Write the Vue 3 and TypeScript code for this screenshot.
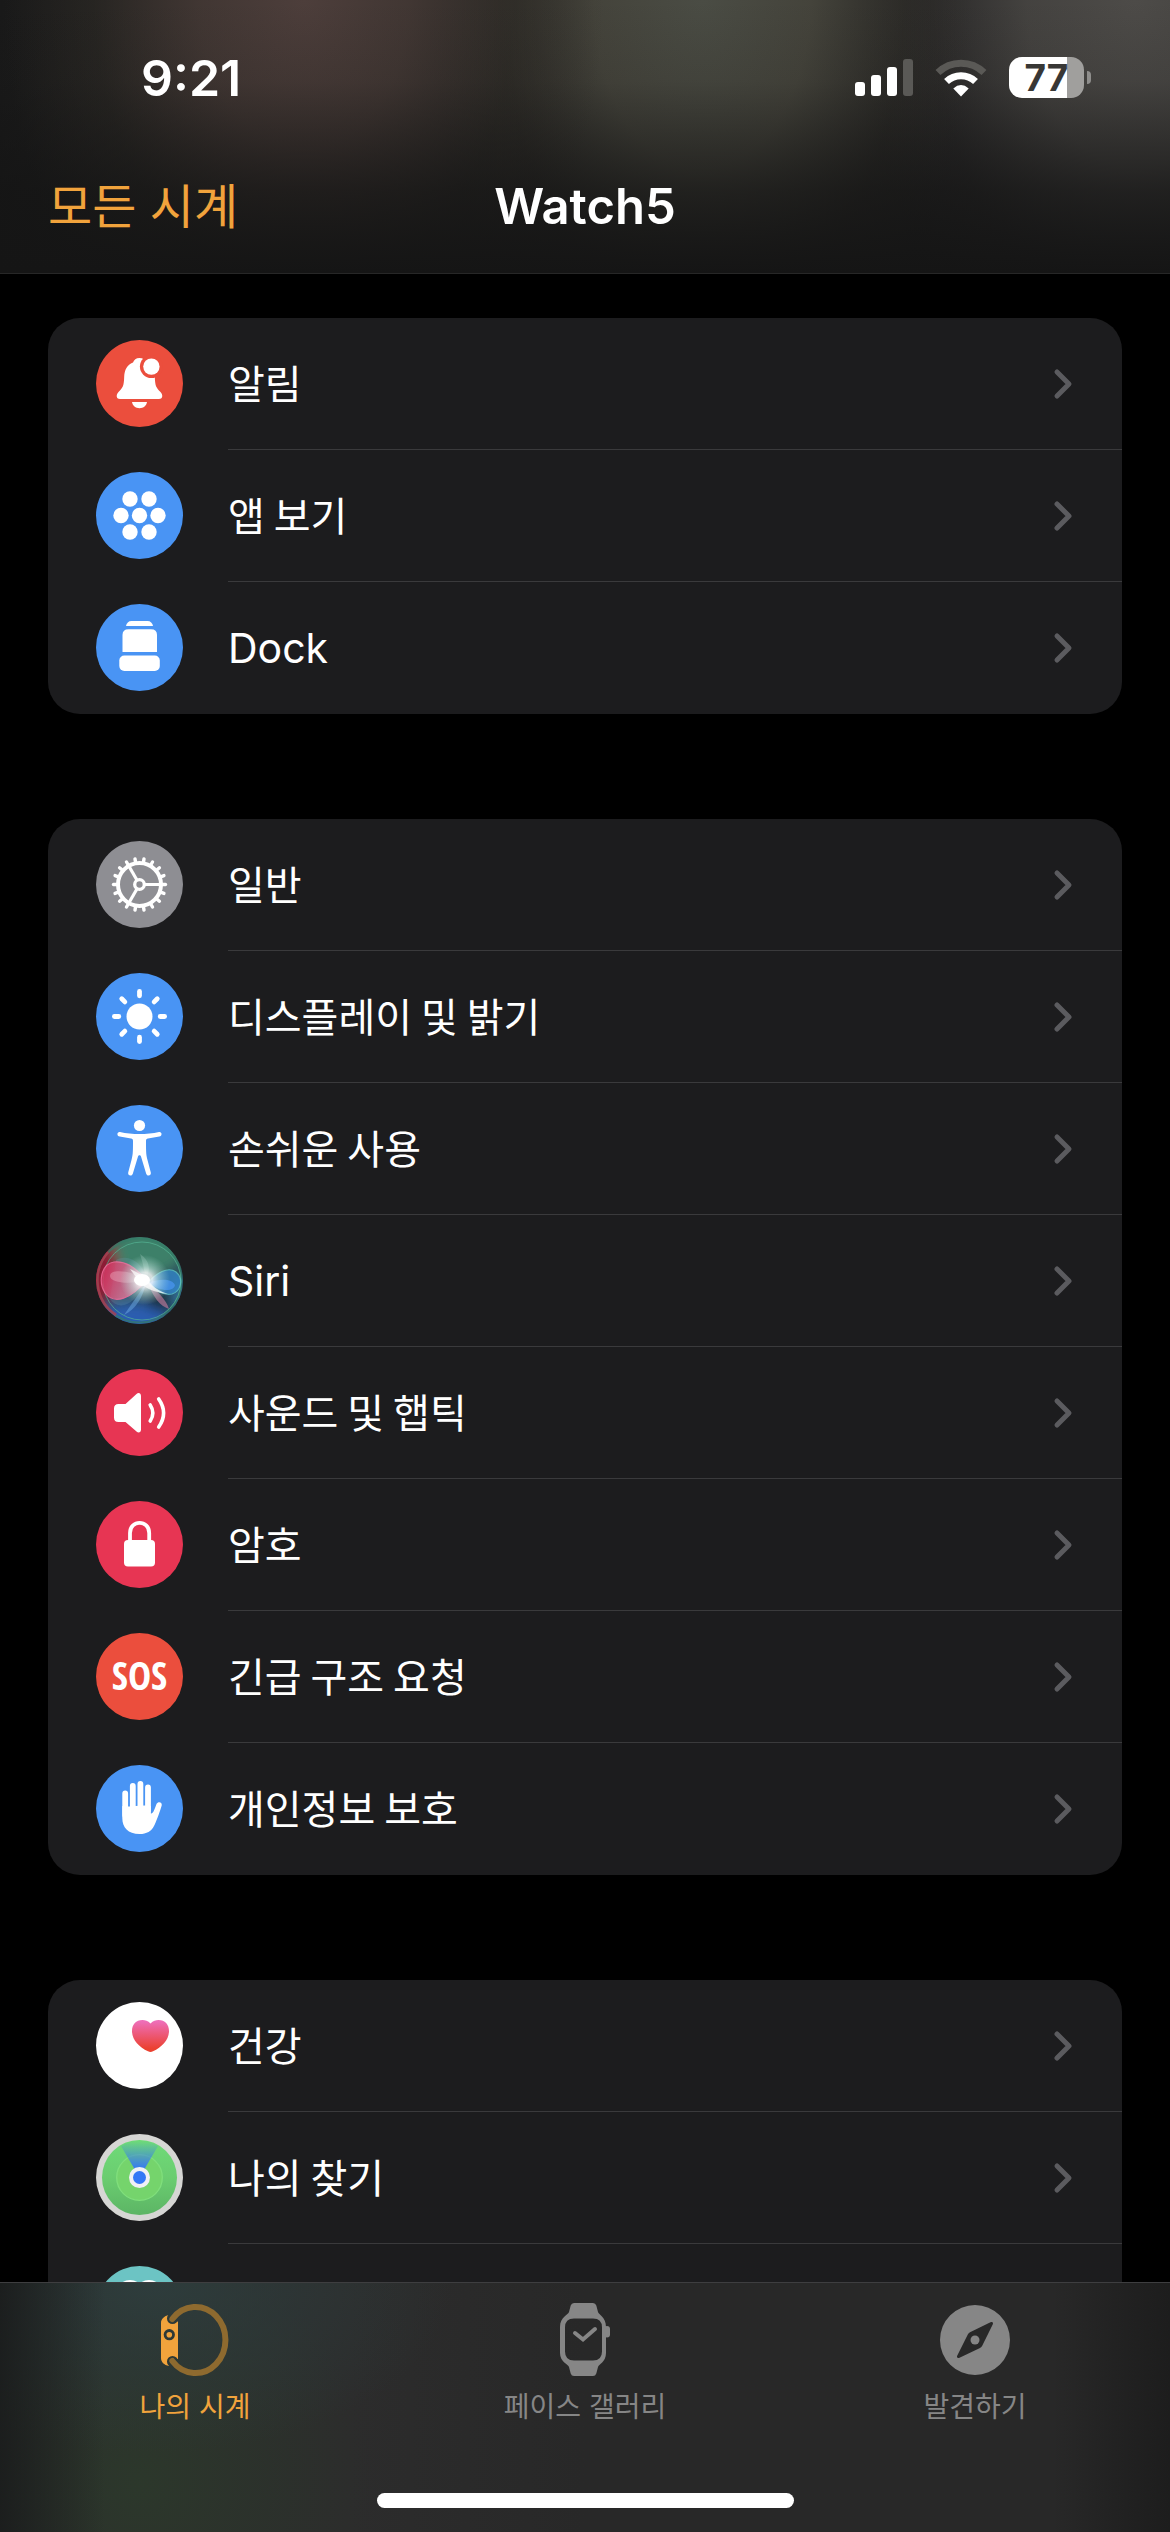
<script setup lang="ts">
interface Row {
  icon: string
  label: string
  color: string
  latin?: boolean
}

const groups: Row[][] = [
  [
    { icon: 'bell', label: '알림', color: '#eb4e3d' },
    { icon: 'apps', label: '앱 보기', color: '#4994f4' },
    { icon: 'dock', label: 'Dock', color: '#4994f4', latin: true },
  ],
  [
    { icon: 'gear', label: '일반', color: '#8e8e93' },
    { icon: 'sun', label: '디스플레이 및 밝기', color: '#4994f4' },
    { icon: 'person', label: '손쉬운 사용', color: '#4994f4' },
    { icon: 'siri', label: 'Siri', color: '#2a4a58', latin: true },
    { icon: 'speaker', label: '사운드 및 햅틱', color: '#e73553' },
    { icon: 'lock', label: '암호', color: '#e73553' },
    { icon: 'sos', label: '긴급 구조 요청', color: '#eb4e3d' },
    { icon: 'hand', label: '개인정보 보호', color: '#4994f4' },
  ],
  [
    { icon: 'heart', label: '건강', color: '#ffffff' },
    { icon: 'findmy', label: '나의 찾기', color: '#d6d6d4' },
    { icon: 'mind', label: '', color: '#6cc4c4' },
  ],
]

const appDots: [number, number][] = [
  [34, 27], [53, 27], [25, 43.5], [43.5, 43.5], [62, 43.5], [34, 60], [53, 60],
]
const teeth: number[] = Array.from({ length: 18 }, (_, i) => i * 20)
const rays: number[] = Array.from({ length: 8 }, (_, i) => i * 45)
const bars: number[] = [14, 21, 29, 37]
</script>

<template>
  <div class="screen">
    <header class="top">
      <div class="status">
        <time class="clock">9:21</time>
        <div class="indicators">
          <svg class="signal" width="58" height="37" viewBox="0 0 58 37" aria-hidden="true">
            <rect
              v-for="(h, i) in bars" :key="i" :x="i * 16" :y="37 - h" width="10" :height="h" rx="3"
              :fill="i === 3 ? '#5a5956' : '#fff'"
            />
          </svg>
          <svg class="wifi" width="52" height="38" viewBox="0 0 52 38" fill="none" aria-hidden="true">
            <path d="M3 13.500A33 33 0 0 1 49 13.500" stroke="#5a5956" stroke-width="7" />
            <path d="M11.500 22.500A21 21 0 0 1 40.500 22.500" stroke="#fff" stroke-width="7" />
            <path d="M26 37.500L18.300 29.400Q26 22.500 33.700 29.400Z" fill="#fff" />
          </svg>
          <div class="battery">
            <span class="cell">77</span>
            <span class="tip"></span>
          </div>
        </div>
      </div>
      <div class="nav">
        <a class="back" href="#">모든 시계</a>
        <h1 class="title">Watch5</h1>
        <span></span>
      </div>
    </header>

    <main class="content">
      <ul v-for="(rows, g) in groups" :key="g" class="card">
        <li v-for="row in rows" :key="row.icon">
          <a class="row" href="#">
            <svg class="icon" viewBox="0 0 87 87" fill="#fff" aria-hidden="true">
              <circle cx="43.5" cy="43.5" r="43.5" :fill="row.color" />
              <g v-if="row.icon === 'bell'">
                <path d="M43.500 18C40 18 38 20 37 22.500C31 25 28.500 30 28.200 36.500C27.900 46 27 47.500 22.500 52C19.500 55.500 20.500 59 24 59H63C66.500 59 67.500 55.500 64.500 52C60 47.500 59.100 46 58.800 36.500C58.500 30 56 25 50 22.500C49 20 47 18 43.500 18Z" />
                <path d="M36 62H51C50.500 65.500 47.500 68.200 43.500 68.200S36.500 65.500 36 62Z" />
                <circle cx="55.400" cy="26.600" r="11.500" :fill="row.color" />
                <circle cx="55.400" cy="26.600" r="8.200" />
              </g>
              <g v-else-if="row.icon === 'apps'">
                <circle v-for="(d, i) in appDots" :key="i" :cx="d[0]" :cy="d[1]" r="7.700" />
              </g>
              <g v-else-if="row.icon === 'dock'">
                <path d="M30 22C30.500 19 32.500 17 35.500 17H51.500C54.500 17 56.500 19 57 22Z" />
                <path d="M26.500 48V31Q26.500 25.200 32.500 25.200H55Q61 25.200 61 31V48Z" />
                <rect x="23.300" y="51.500" width="40.500" height="15.500" rx="5" />
              </g>
              <g v-else-if="row.icon === 'gear'" stroke="#fff" fill="none">
                <circle cx="43.5" cy="43.5" r="21.500" stroke-width="4" />
                <path
                  v-for="t in teeth" :key="t" d="M66 43.500H69.500" stroke-width="3.400" stroke-linecap="round"
                  :transform="`rotate(${t} 43.500 43.500)`"
                />
                <circle cx="43.5" cy="43.5" r="4.800" stroke-width="3.300" />
                <path
                  v-for="t in [0, 120, 240]" :key="'s' + t" d="M49 43.500H64" stroke-width="3.200"
                  :transform="`rotate(${t} 43.500 43.500)`"
                />
              </g>
              <g v-else-if="row.icon === 'sun'">
                <circle cx="43.5" cy="43.5" r="13" />
                <path
                  v-for="t in rays" :key="t" d="M64.200 43.500H68.600" stroke="#fff" stroke-width="4.800"
                  stroke-linecap="round" :transform="`rotate(${t} 43.500 43.500)`"
                />
              </g>
              <g v-else-if="row.icon === 'person'">
                <circle cx="43.500" cy="20.500" r="5.600" />
                <path
                  d="M24 27C30 28.500 37 29 43.500 29S57 28.500 63 27C66.200 26.500 66.500 31 63.300 31.600L52 33.500C50.500 33.800 50 34.500 50 36C50 48 50.200 50 51.500 55L54.800 67.500C55.500 70.800 51.300 71.800 50.200 68.700L45 51.500C44.500 49.800 42.500 49.800 42 51.500L36.800 68.700C35.700 71.800 31.500 70.800 32.200 67.500L35.500 55C36.800 50 37 48 37 36C37 34.500 36.500 33.800 35 33.500L23.700 31.600C20.500 31 20.800 26.500 24 27Z"
                />
              </g>
              <g v-else-if="row.icon === 'siri'" clip-path="url(#orb-clip)">
                <defs>
                  <clipPath id="orb-clip"><circle cx="43.5" cy="43.5" r="43.5" /></clipPath>
                  <filter id="orb-blur" x="-50%" y="-50%" width="200%" height="200%"><feGaussianBlur stdDeviation="6" /></filter>
                  <radialGradient id="orb-flare">
                    <stop offset="0" stop-color="#fff" />
                    <stop offset="0.3" stop-color="#fff" />
                    <stop offset="0.55" stop-color="#d5f5ee" stop-opacity="0.6" />
                    <stop offset="1" stop-color="#a8dcd2" stop-opacity="0" />
                  </radialGradient>
                  <linearGradient id="orb-pink" x1="0" y1="0" x2="1" y2="0.300">
                    <stop offset="0" stop-color="#d32a58" />
                    <stop offset="1" stop-color="#d78fab" />
                  </linearGradient>
                </defs>
                <g filter="url(#orb-blur)">
                  <ellipse cx="52" cy="14" rx="36" ry="24" fill="#3e8069" />
                  <ellipse cx="5" cy="32" rx="17" ry="34" fill="#8c1f36" />
                  <ellipse cx="36" cy="82" rx="36" ry="16" fill="#2b5db0" />
                  <ellipse cx="66" cy="65" rx="16" ry="9" fill="#1c323e" />
                  <ellipse cx="84" cy="58" rx="8" ry="20" fill="#336f9a" />
                </g>
                <circle cx="43.500" cy="43.500" r="42" fill="none" stroke="#357d68" stroke-width="2" opacity="0.7" />
                <circle cx="46" cy="44" r="39" fill="none" stroke="#56b596" stroke-width="1" opacity="0.7" />
                <path d="M12 15A42 42 0 0 0 20 78" fill="none" stroke="#d22947" stroke-width="3" opacity="0.6" />
                <path d="M20 23C32 16 48 26 50 42C40 70 22 74 14 62" fill="#6ba0b8" opacity="0.25" />
                <path d="M50 43C38 29 29 24 18 25C5 27 2 45 9 56C18 68 36 62 50 43Z" fill="url(#orb-pink)" opacity="0.85" stroke="#f66c9c" stroke-width="1.200" />
                <path d="M49 43C38 34 14 31 14 39C14 46 35 48 49 43Z" fill="#f0b3c5" opacity="0.4" />
                <path d="M52 46C60 36 72 29 80 35C88 42 85 54 76 57C67 59 59 53 52 46Z" fill="#3387cc" opacity="0.75" stroke="#61cbd0" stroke-width="1.200" />
                <path d="M52 46C65 41 76 42 79 48C78 55 64 55 52 46Z" fill="#4a97f4" opacity="0.7" />
                <path d="M50 46L28 78C40 72 47 60 50 46Z" fill="#6baae4" opacity="0.5" />
                <path d="M52 46C60 53 70 62 73 72C64 69 57 60 52 46Z" fill="#b57697" opacity="0.7" />
                <path d="M49 43C49 32 46 24 44 17C53 23 56 32 49 43Z" fill="#9cc7b8" opacity="0.35" />
                <circle cx="49" cy="43" r="25" fill="url(#orb-flare)" opacity="0.8" />
                <ellipse cx="46" cy="43" rx="8" ry="6" />
                <path d="M34 32Q48 38 56 48Q62 54 72 57Q58 56 46 48Z" opacity="0.7" />
              </g>
              <g v-else-if="row.icon === 'speaker'">
                <path d="M22.500 35H29.500L40.500 25C42.500 23.200 45 24.200 45 27V60.500C45 63.500 42.500 64.300 40.500 62.500L29.500 53H22.500Q18 53 18 48.500V39.500Q18 35 22.500 35Z" />
                <path d="M54.200 36Q59.500 44 54.200 52M62.700 30Q72.500 44 62.700 58" fill="none" stroke="#fff" stroke-width="3.600" stroke-linecap="round" />
              </g>
              <g v-else-if="row.icon === 'lock'">
                <rect x="28" y="39" width="31" height="26.500" rx="4" />
                <path d="M34 41V32C34 18.500 53.200 18.500 53.200 32V41" fill="none" stroke="#fff" stroke-width="3.800" />
              </g>
              <text v-else-if="row.icon === 'sos'" class="sos" x="43.5" y="57" text-anchor="middle">SOS</text>
              <g v-else-if="row.icon === 'hand'">
                <path
                  d="M29.200 28.500V50M36.800 21V45M44.400 19V45M52 22.500V45" fill="none" stroke="#fff"
                  stroke-width="5.800" stroke-linecap="round"
                />
                <path d="M26.300 41C33 43 45 39 54.900 41V48.500C57.500 49 59 42.500 60.500 39C62 36 66.500 37 65.700 40.500C64 46 61 55 58.500 60C55.500 66.500 50.500 69 43.500 69C32 69 26.300 62.500 26.300 53Z" />
              </g>
              <g v-else-if="row.icon === 'heart'">
                <defs>
                  <linearGradient id="heart-fill" x1="0" y1="0" x2="0" y2="1">
                    <stop offset="0.050" stop-color="#ee6eb8" />
                    <stop offset="0.900" stop-color="#eb4130" />
                  </linearGradient>
                </defs>
                <path d="M54.500 21.500C57 18.500 60 18 62.500 18C69 18 73 22.500 73 29C73 38 66 45 57 49.300Q54.500 50.600 52 49.300C43 45 36 38 36 29C36 22.500 40 18 46.500 18C49 18 52 18.500 54.500 21.500Z" fill="url(#heart-fill)" />
              </g>
              <g v-else-if="row.icon === 'findmy'">
                <defs>
                  <linearGradient id="radar" x1="0" y1="0" x2="0" y2="1">
                    <stop offset="0" stop-color="#6edb78" />
                    <stop offset="0.500" stop-color="#6bcd70" />
                    <stop offset="1" stop-color="#5cb565" />
                  </linearGradient>
                  <linearGradient id="beam" x1="0" y1="0" x2="0" y2="1">
                    <stop offset="0" stop-color="#3478f6" stop-opacity="0" />
                    <stop offset="0.700" stop-color="#3478f6" stop-opacity="0.9" />
                    <stop offset="1" stop-color="#3478f6" />
                  </linearGradient>
                </defs>
                <circle cx="43.5" cy="43.5" r="37.500" fill="url(#radar)" />
                <circle cx="43.5" cy="43.5" r="22.800" fill="#75d46c" stroke="#80df7c" stroke-width="1.300" />
                <path d="M43.500 43.500L25 12A37 37 0 0 1 62 12Z" fill="url(#beam)" />
                <circle cx="43.5" cy="43.5" r="10.500" fill="#f0f0f5" />
                <circle cx="43.5" cy="43.5" r="6.500" fill="#3478f6" />
              </g>
              <g v-else>
                <circle cx="34" cy="28" r="14" />
                <circle cx="53" cy="28" r="14" />
              </g>
            </svg>
            <span class="line">
              <span class="label" :class="{ latin: row.latin }">{{ row.label }}</span>
              <svg class="chevron" width="20" height="32" viewBox="0 0 20 32" fill="none" aria-hidden="true">
                <path d="M4 4L16 16L4 28" stroke="#5b5b5f" stroke-width="5" stroke-linecap="round" stroke-linejoin="round" />
              </svg>
            </span>
          </a>
        </li>
      </ul>
    </main>

    <footer class="bottom">
      <nav class="tabs">
        <a class="tab active" href="#">
          <svg width="68" height="74" viewBox="0 -1 68 74" fill="none" aria-hidden="true">
            <mask id="case-cut">
              <rect x="0" y="0" width="68" height="74" fill="#fff" />
              <circle cx="11.500" cy="14.500" r="5.500" fill="#000" />
              <circle cx="11.500" cy="57.500" r="5.500" fill="#000" />
              <circle cx="8.300" cy="30.700" r="5.600" fill="#000" />
            </mask>
            <path d="M8 11C3 12 0 15 0 19V54C0 58 3 61 8 62L11 55H17V17.500L11 18Z" fill="#f1a33c" mask="url(#case-cut)" />
            <circle cx="8.300" cy="30.700" r="2.800" fill="#f1a33c" />
            <path d="M11.300 15A30 33 0 1 1 11.300 57" stroke="#8e6a2f" stroke-width="6" stroke-linecap="round" />
          </svg>
          <span>나의 시계</span>
        </a>
        <a class="tab" href="#">
          <svg width="50" height="74" viewBox="0 0 50 74" aria-hidden="true">
            <path
              fill-rule="evenodd" fill="#868686"
              d="M14 0H33Q35.500 0 36.300 2.500L38 9C38.500 11.500 46 14 46 24V50C46 59 38.500 61.500 38 64L36.300 70.500Q35.500 73 33 73H14Q11.500 73 10.700 70.500L9 64C8.500 61.500 0 59 0 50V24C0 14 8.500 11.500 9 9L10.700 2.500Q11.500 0 14 0ZM14 15.500Q5 15.500 5 24.500V48.500Q5 57.500 14 57.500H33Q42 57.500 42 48.500V24.500Q42 15.500 33 15.500Z"
            />
            <rect x="44" y="23" width="6" height="11.500" rx="3" fill="#868686" />
            <path d="M15 30L23 36.500L35 26" fill="none" stroke="#868686" stroke-width="4" stroke-linecap="round" />
          </svg>
          <span>페이스 갤러리</span>
        </a>
        <a class="tab" href="#">
          <svg width="70" height="74" viewBox="0 -2 70 74" aria-hidden="true">
            <path
              fill-rule="evenodd" fill="#868686"
              d="M35 0A35 35 0 1 1 35 70A35 35 0 1 1 35 0ZM50.500 17.300L30 27.200Q28.500 28 27.800 29.500L17.300 50.500C16.300 52.500 17.700 53.700 19.500 52.700L40 43Q41.500 42.300 42.200 40.800L52.700 19.500C53.700 17.500 52.300 16.300 50.500 17.300Z"
            />
            <circle cx="35" cy="35" r="4.500" fill="#868686" />
          </svg>
          <span>발견하기</span>
        </a>
      </nav>
      <div class="home"></div>
    </footer>
  </div>
</template>

<style>
body {
  margin: 0;
  background: #000;
}
</style>

<style scoped>
.screen {
  height: 100vh;
  display: flex;
  flex-direction: column;
  background: #000;
  color: #fff;
  font-family: Inter, "Noto Sans CJK KR", sans-serif;
}
a {
  color: inherit;
  text-decoration: none;
}
.top {
  flex: none;
  padding-bottom: 14px;
  border-bottom: 1px solid #272727;
  background:
    linear-gradient(rgba(20, 20, 20, 0), rgba(20, 20, 20, 0.1) 30%, rgba(20, 20, 20, 0.7) 70%, #151515),
    radial-gradient(ellipse 300px 420px at 26% 0, #4d3e3b, rgba(70, 58, 54, 0.85) 35%, rgba(50, 46, 40, 0.45) 70%, transparent),
    radial-gradient(ellipse 270px 420px at 60% 0, #4a4c44, rgba(72, 71, 62, 0.9) 40%, rgba(50, 48, 42, 0.5) 75%, transparent),
    radial-gradient(ellipse 270px 420px at 97% 0, #4d4b48, rgba(74, 72, 69, 0.85) 40%, rgba(50, 48, 48, 0.5) 75%, transparent),
    linear-gradient(90deg, #191919, #242322 20%, #222);
}
.status {
  height: 155px;
  padding: 0 79px 0 141px;
  display: flex;
  align-items: center;
  justify-content: space-between;
}
.clock {
  font-size: 50px;
  font-weight: 600;
  line-height: 60px;
}
.indicators {
  display: flex;
  align-items: center;
  gap: 22px;
}
.battery {
  display: flex;
  align-items: center;
  gap: 3px;
}
.cell {
  width: 75px;
  height: 41px;
  box-sizing: border-box;
  border-radius: 13px;
  background: linear-gradient(90deg, #fff 78%, #a09f9d 78%);
  color: #383735;
  font-size: 37px;
  font-weight: 700;
  line-height: 41px;
  text-align: center;
}
.tip {
  width: 4px;
  height: 13px;
  border-radius: 0 4px 4px 0;
  background: #8f8e8c;
}
.nav {
  height: 104px;
  padding: 0 48px;
  display: grid;
  grid-template-columns: 1fr auto 1fr;
  align-items: center;
}
.back {
  color: #f1a33c;
  font-size: 48px;
  line-height: 60px;
}
.title {
  margin: 0;
  font-size: 49px;
  font-weight: 600;
  line-height: 60px;
}
.content {
  flex: 1;
  min-height: 0;
  overflow: hidden;
  padding: 44px 48px 0;
}
.card {
  list-style: none;
  margin: 0 0 105px;
  padding: 0;
  border-radius: 32px;
  background: #1c1c1e;
  overflow: hidden;
}
.row {
  display: flex;
  align-items: center;
  gap: 45px;
  padding-left: 48px;
}
.icon {
  flex: none;
  width: 87px;
  height: 87px;
  margin-bottom: 1px;
}
.sos {
  font-family: "Noto Sans ExtraCondensed", "Open Sans Condensed", "Roboto Condensed", "Liberation Sans Narrow", Roboto, sans-serif;
  font-size: 39px;
  font-weight: 700;
}
.line {
  flex: 1;
  height: 132px;
  box-sizing: border-box;
  padding-right: 49px;
  border-bottom: 1px solid #3a3a3c;
  display: flex;
  align-items: center;
  justify-content: space-between;
}
li:last-child .line {
  border-bottom-color: transparent;
}
.label {
  padding-bottom: 4px;
  font-family: "Noto Sans CJK KR", sans-serif;
  font-size: 40px;
  line-height: 56px;
}
.latin {
  padding-bottom: 0;
  font-family: Inter, sans-serif;
  font-size: 41px;
}
.bottom {
  flex: none;
  padding-bottom: 24px;
  border-top: 1px solid #3e3e40;
  background:
    linear-gradient(90deg, rgba(26, 28, 28, 0.9), transparent 9%, transparent 90%, rgba(26, 26, 26, 0.8)),
    radial-gradient(ellipse 300px 170px at 13% 0, rgba(46, 62, 62, 0.9), transparent),
    radial-gradient(ellipse 230px 240px at 12% 80%, rgba(44, 56, 43, 0.95), transparent),
    linear-gradient(90deg, #2a2c2b, #2c2c2c 30%, #282828 50%);
}
.tabs {
  display: grid;
  grid-template-columns: repeat(3, 1fr);
  padding-top: 20px;
}
.tab {
  display: flex;
  flex-direction: column;
  align-items: center;
  gap: 10px;
  color: #868686;
  font-size: 28px;
  line-height: 40px;
}
.active {
  color: #f1a33c;
}
.home {
  width: 417px;
  height: 15px;
  margin: 66px auto 0;
  border-radius: 8px;
  background: #fff;
}
</style>
